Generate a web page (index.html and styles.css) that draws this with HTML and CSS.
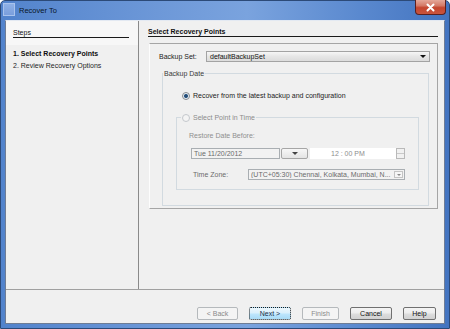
FILE: index.html
```html
<!DOCTYPE html>
<html lang="en">
<head>
<meta charset="utf-8">
<title>Recover To</title>
<link rel="stylesheet" href="styles.css">
</head>
<body>
<div class="window">
  <header class="titlebar">
    <span class="app-icon"></span>
    <span class="title">Recover To</span>
    <button class="close" type="button" aria-label="Close">
      <svg width="11" height="9" viewBox="0 0 11 9"><path d="M2.5 1.5 L8.5 7.5 M8.5 1.5 L2.5 7.5" stroke="#fff" stroke-width="2" stroke-linecap="round"/></svg>
    </button>
  </header>
  <div class="client">
    <div class="main">
      <aside class="steps">
        <div class="steps-head"><span>Steps</span></div>
        <ol class="step-list">
          <li class="current">1. Select Recovery Points</li>
          <li>2. Review Recovery Options</li>
        </ol>
      </aside>
      <section class="content">
        <h2 class="content-head">Select Recovery Points</h2>
        <div class="panel">
          <div class="field-row">
            <span class="set-label">Backup Set:</span>
            <div class="combo"><span class="combo-text">defaultBackupSet</span><span class="tri"></span></div>
          </div>
          <fieldset class="group date-group">
            <legend>Backup Date</legend>
            <div class="radio-row"><span class="radio checked"></span><span>Recover from the latest backup and configuration</span></div>
            <fieldset class="group pit-group">
              <legend><span class="radio off"></span><span>Select Point in Time</span></legend>
              <div class="restore-label">Restore Date Before:</div>
              <div class="dt-row">
                <div class="date-box">Tue 11/20/2012</div>
                <div class="drop-btn"><span class="tri small"></span></div>
                <div class="time-box"><span class="time-text">12 : 00 PM</span></div>
                <div class="spinner"><span class="spin"></span><span class="spin"></span></div>
              </div>
              <div class="tz-row">
                <span class="tz-label">Time Zone:</span>
                <div class="tz-combo"><span class="tz-text">(UTC+05:30) Chennai, Kolkata, Mumbai, N...</span><span class="tz-arrow"><span class="tri tiny"></span></span></div>
              </div>
            </fieldset>
          </fieldset>
        </div>
      </section>
    </div>
    <footer class="buttons">
      <button class="btn disabled back" type="button">&lt; Back</button>
      <button class="btn focused next" type="button">Next &gt;</button>
      <button class="btn disabled finish" type="button">Finish</button>
      <button class="btn cancel" type="button">Cancel</button>
      <button class="btn help" type="button">Help</button>
    </footer>
  </div>
</div>
</body>
</html>
```

FILE: styles.css
```css
* { box-sizing: border-box; }
html, body { margin: 0; padding: 0; }
body {
  width: 450px; height: 329px; overflow: hidden; background: #fff;
  font-family: "Liberation Sans", Arial, sans-serif; font-size: 7px; color: #1b1b1b;
}
.window {
  width: 450px; height: 329px; display: flex; flex-direction: column;
  background: linear-gradient(to right, #5283cc 0%, #6d98d8 35%, #7aa3de 55%, #5a89cf 80%, #4374c0 100%);
  border: 1px solid #2c4a78; border-radius: 5px 5px 0 0;
}
.titlebar { height: 19px; flex: none; display: flex; align-items: flex-start; padding-left: 2px; }
.app-icon {
  width: 12px; height: 13px; margin-top: 2px;
  background: linear-gradient(#8fb1e6, #7a9edc); border: 1px solid #a9c3ec;
}
.title { margin-left: 4px; margin-top: 5px; line-height: 9px; font-size: 7.5px; color: #0a1628; }
.close {
  margin-left: auto; margin-right: 3px; margin-top: -1px; width: 31px; height: 15px; padding: 0;
  display: flex; align-items: center; justify-content: center;
  border: 1px solid #5a2020; border-top: none; border-radius: 0 0 4px 4px;
  background: linear-gradient(#e4a799 0%, #d47a68 40%, #c4452f 55%, #c9553e 100%);
}
.client {
  flex: 1; margin: 0 4px 4px 4px; display: flex; flex-direction: column;
  background: #f0f0f0; border: 1px solid #6f7d95; border-top-color: #e3e9f2;
}
.main { flex: none; height: 269px; display: flex; border-bottom: 1px solid #a0a0a0; }
.steps { width: 133px; flex: none; background: #f0f0f0; border-right: 1px solid #8a8a8a; display: flex; flex-direction: column; }
.steps-head { height: 24px; background: #f7f7f7; padding: 7px 9px 0 7px; }
.steps-head span { display: block; line-height: 9px; border-bottom: 1px solid #1a1a1a; color: #111; }
.step-list { list-style: none; margin: 0; padding: 3px 0 0 7px; }
.step-list li { line-height: 12px; color: #1e1e1e; }
.step-list li.current { font-weight: bold; color: #0e0e0e; }
.content { flex: 1; display: flex; flex-direction: column; }
.content-head {
  margin: 6px 6px 0 9px; font-size: 7px; line-height: 9px; font-weight: bold; color: #111;
  border-bottom: 1px solid #1a1a1a;
}
.panel {
  margin: 6px 6px 0 10px; padding: 7px 0 2px 9px;
  border: 1px solid #a5a5a5; border-left-color: #fdfdfd;
}
.field-row { display: flex; height: 11px; align-items: center; }
.set-label { width: 47px; line-height: 11px; color: #1b1b1b; }
.combo {
  width: 224px; height: 11px; display: flex; align-items: center; padding: 0 3px 0 3px;
  border: 1px solid #a3a3a3; background: linear-gradient(#f6f6f6, #e6e6e6 50%, #dcdcdc);
}
.combo-text { flex: 1; color: #111; }
.tri { width: 0; height: 0; border-left: 3px solid transparent; border-right: 3px solid transparent; border-top: 3px solid #111; }
.tri.small { border-top-color: #444; }
.tri.tiny { border-left-width: 2px; border-right-width: 2px; border-top: 2px solid #888; }
fieldset.group { margin: 0; padding: 0; min-width: 0; border: 1px solid #d2dae0; }
fieldset.group > legend { padding: 0 1px; line-height: 9px; }
fieldset.date-group { margin: 7px 8px 0 3px; padding: 0 0 15px 0; }
fieldset.date-group > legend { color: #3a3a3a; margin-left: 0; }
.radio-row { display: flex; align-items: center; height: 9px; margin: 13px 0 0 19px; }
.radio { width: 8px; height: 8px; border-radius: 50%; margin-right: 3px; flex: none; }
.radio.checked {
  border: 1px solid #868a8e;
  background: radial-gradient(circle, #253f5e 0, #2f5b88 1.6px, #e8eef4 2.4px, #f6f8fa 100%);
}
.radio.off { border: 1px solid #c4c8cc; background: #f4f4f4; }
fieldset.pit-group { margin: 13px 9px 0 13px; padding: 0 0 9px 0; }
fieldset.pit-group > legend { display: flex; align-items: center; margin-left: 4px; color: #8c8c8c; }
.restore-label { margin: 9px 0 0 12px; line-height: 9px; color: #8f8f8f; }
.dt-row { display: flex; height: 11px; margin: 8px 0 0 14px; }
.date-box {
  width: 89px; padding-left: 2px; line-height: 9px; color: #6b6b6b;
  border: 1px solid #a9aeb2; background: #f2f2f2;
}
.drop-btn {
  width: 27px; margin-left: 1px; display: flex; align-items: center; justify-content: center;
  border: 1px solid #a6a6a6; border-radius: 2px; background: linear-gradient(#f7f7f7, #e4e4e4);
}
.time-box { width: 86px; margin-left: 2px; background: #fff; padding-left: 21px; line-height: 11px; color: #8d8d8d; }
.spinner { width: 9px; display: flex; flex-direction: column; border: 1px solid #b9b9b9; background: #f1f1f1; }
.spin { flex: 1; border-bottom: 1px solid #c9c9c9; }
.spin:last-child { border-bottom: none; }
.tz-row { display: flex; height: 11px; margin: 10px 0 0 16px; align-items: center; }
.tz-label { width: 55px; color: #6b6b6b; }
.tz-combo {
  width: 157px; height: 11px; display: flex; align-items: center; padding-left: 2px;
  border: 1px solid #a9aeb2; background: #f2f2f2;
}
.tz-text { flex: 1; color: #6b6b6b; white-space: nowrap; overflow: hidden; }
.tz-arrow {
  width: 9px; height: 7px; margin-right: 1px; display: flex; align-items: center; justify-content: center;
  border: 1px solid #c4c4c4; background: #f6f6f6;
}
.buttons { flex: 1; display: flex; align-items: flex-start; justify-content: flex-end; gap: 11px; padding: 17px 8px 0 0; }
.btn {
  height: 13px; padding: 0; font-family: inherit; font-size: 7px; line-height: 11px; text-align: center;
  border: 1px solid #707070; border-radius: 2px; color: #111;
  background: linear-gradient(#f4f4f4 0%, #ececec 48%, #dddddd 52%, #d1d1d1 100%);
}
.btn.disabled { border-color: #b5b9bc; background: #f4f4f4; color: #8a8a8a; }
.btn.focused {
  border: 1px dotted #1c1c1c; color: #1a2f48;
  background: linear-gradient(#ecf7fd 0%, #d9f0fc 48%, #bee6fd 52%, #a9dbf6 100%);
}
.back { width: 41px; }
.next { width: 42px; }
.finish { width: 37px; }
.cancel { width: 42px; }
.help { width: 33px; }
```
